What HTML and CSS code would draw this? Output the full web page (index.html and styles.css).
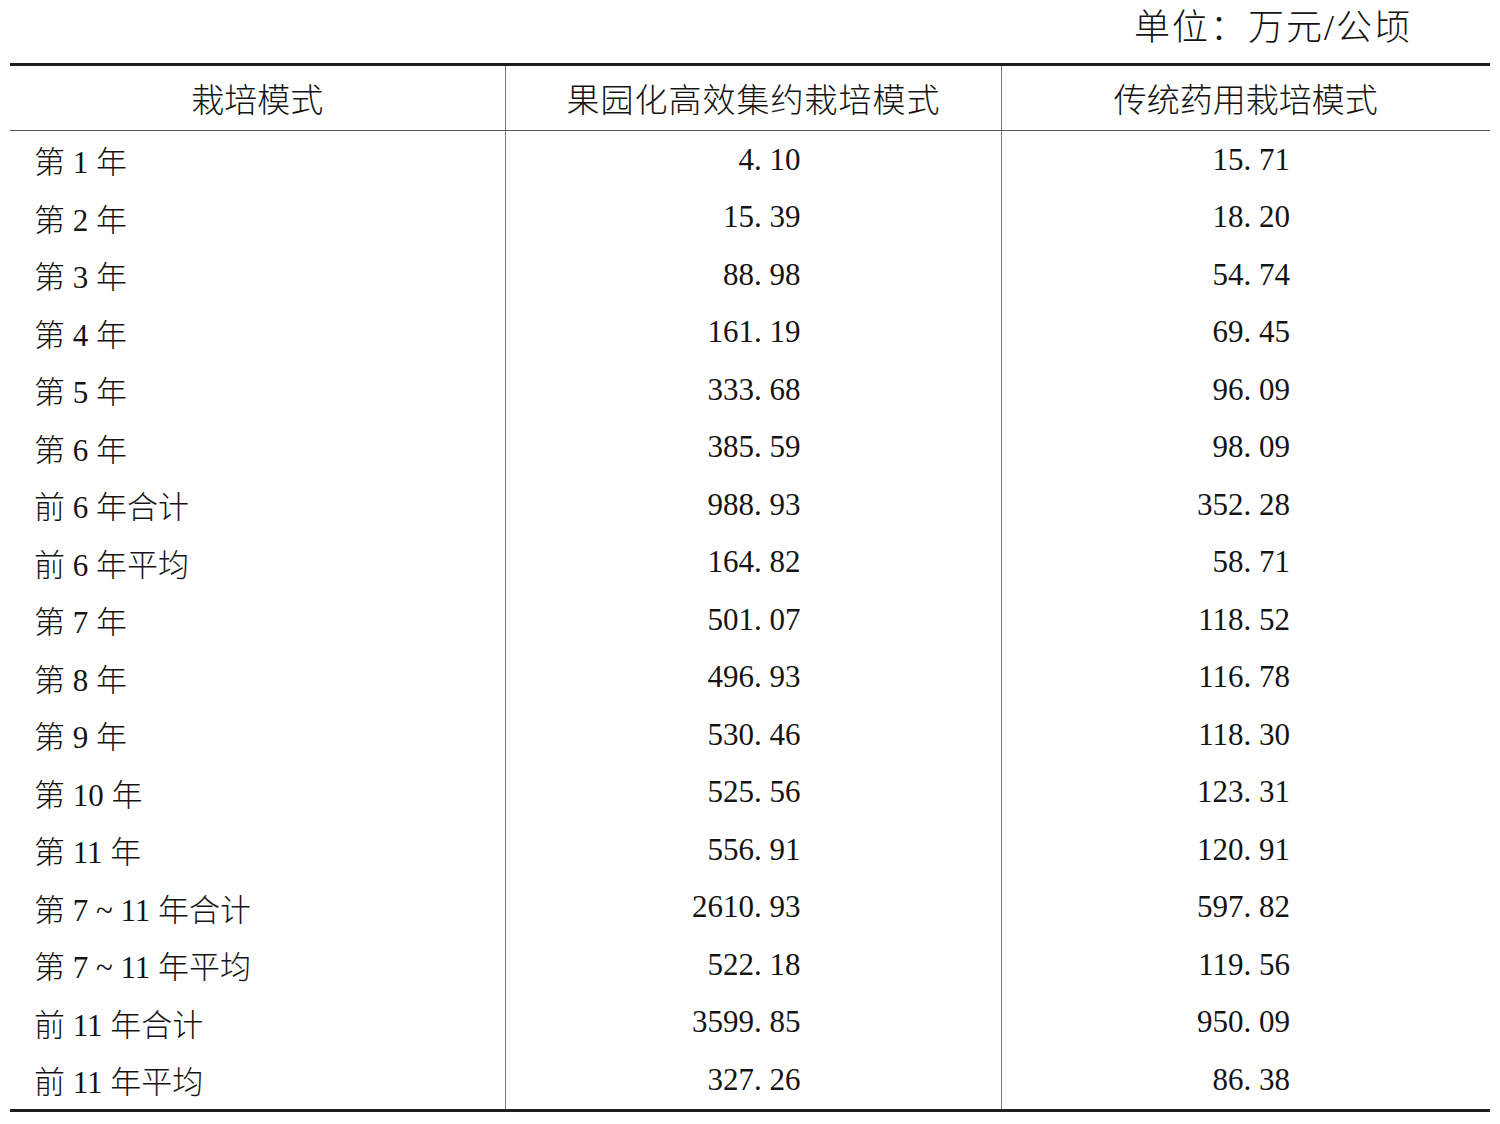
FILE: index.html
```html
<!DOCTYPE html>
<html lang="zh-CN">
<head>
<meta charset="utf-8">
<title>栽培模式收益</title>
<link rel="stylesheet" href="styles.css">
</head>
<body>
<div class="page">
  <div class="unit">单位：万元/公顷</div>
  <table class="data">
    <colgroup>
      <col class="c1"><col class="c2"><col class="c3">
    </colgroup>
    <thead>
      <tr>
        <th>栽培模式</th>
        <th class="wide">果园化高效集约栽培模式</th>
        <th>传统药用栽培模式</th>
      </tr>
    </thead>
    <tbody>
      <tr><td class="lbl">第 1 年</td><td class="num">4. 10</td><td class="num">15. 71</td></tr>
      <tr><td class="lbl">第 2 年</td><td class="num">15. 39</td><td class="num">18. 20</td></tr>
      <tr><td class="lbl">第 3 年</td><td class="num">88. 98</td><td class="num">54. 74</td></tr>
      <tr><td class="lbl">第 4 年</td><td class="num">161. 19</td><td class="num">69. 45</td></tr>
      <tr><td class="lbl">第 5 年</td><td class="num">333. 68</td><td class="num">96. 09</td></tr>
      <tr><td class="lbl">第 6 年</td><td class="num">385. 59</td><td class="num">98. 09</td></tr>
      <tr><td class="lbl">前 6 年合计</td><td class="num">988. 93</td><td class="num">352. 28</td></tr>
      <tr><td class="lbl">前 6 年平均</td><td class="num">164. 82</td><td class="num">58. 71</td></tr>
      <tr><td class="lbl">第 7 年</td><td class="num">501. 07</td><td class="num">118. 52</td></tr>
      <tr><td class="lbl">第 8 年</td><td class="num">496. 93</td><td class="num">116. 78</td></tr>
      <tr><td class="lbl">第 9 年</td><td class="num">530. 46</td><td class="num">118. 30</td></tr>
      <tr><td class="lbl">第 10 年</td><td class="num">525. 56</td><td class="num">123. 31</td></tr>
      <tr><td class="lbl">第 11 年</td><td class="num">556. 91</td><td class="num">120. 91</td></tr>
      <tr><td class="lbl">第 7 ~ 11 年合计</td><td class="num">2610. 93</td><td class="num">597. 82</td></tr>
      <tr><td class="lbl">第 7 ~ 11 年平均</td><td class="num">522. 18</td><td class="num">119. 56</td></tr>
      <tr><td class="lbl">前 11 年合计</td><td class="num">3599. 85</td><td class="num">950. 09</td></tr>
      <tr><td class="lbl">前 11 年平均</td><td class="num">327. 26</td><td class="num">86. 38</td></tr>
    </tbody>
  </table>
</div>
</body>
</html>
```

FILE: styles.css
```css
html, body {
  margin: 0;
  padding: 0;
  background: #ffffff;
}

body {
  font-family: "Liberation Serif", "Noto Sans CJK SC", serif;
  color: #141414;
}

.page {
  width: 1500px;
  padding: 0 10px;
  box-sizing: border-box;
}

.unit {
  text-align: right;
  font-size: 36px;
  line-height: 46px;
  letter-spacing: 2px;
  padding: 5px 78px 0 0;
  height: 63px;
  box-sizing: border-box;
  font-weight: 300;
}

.data {
  width: 1480px;
  border-collapse: collapse;
  table-layout: fixed;
  border-top: 3px solid #1e1e1e;
  border-bottom: 3px solid #1e1e1e;
}

.c1 { width: 495px; }
.c2 { width: 496px; }
.c3 { width: 489px; }

.data th {
  font-weight: 300;
  font-size: 33px;
  height: 64px;
  padding: 0;
  text-align: center;
  vertical-align: middle;
  border-bottom: 1px solid #555;
}

.data th.wide {
  letter-spacing: 1px;
  text-indent: 1px;
}

.data th + th,
.data td + td {
  border-left: 1px solid #777;
}

.data td {
  height: 57.5px;
  padding: 0;
  vertical-align: middle;
  font-size: 31px;
  font-weight: 300;
}

.data td.lbl {
  padding-left: 24px;
}

.data td.num {
  text-align: right;
  padding-right: 200px;
}
```
